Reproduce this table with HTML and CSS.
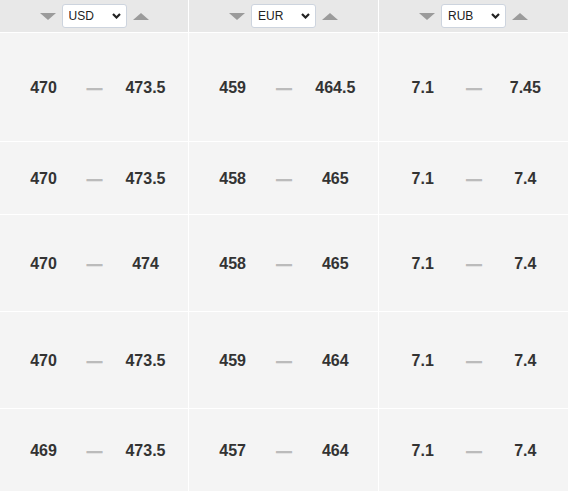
FILE: index.html
```html
<!DOCTYPE html>
<html lang="en">
<head>
<meta charset="utf-8">
<title>Rates</title>
<link rel="stylesheet" href="styles.css">
</head>
<body>
<div class="table">
  <div class="head">
    <span class="tri tri-down"></span>
    <span class="pick"><select class="sel"><option>USD</option><option>EUR</option><option>RUB</option></select><svg class="chev" width="9" height="6" viewBox="0 0 9 6"><path d="M1 1 L4.5 4.5 L8 1" fill="none" stroke="#222" stroke-width="2.2"/></svg></span>
    <span class="tri tri-up"></span>
  </div>
  <div class="head">
    <span class="tri tri-down"></span>
    <span class="pick"><select class="sel"><option>EUR</option><option>USD</option><option>RUB</option></select><svg class="chev" width="9" height="6" viewBox="0 0 9 6"><path d="M1 1 L4.5 4.5 L8 1" fill="none" stroke="#222" stroke-width="2.2"/></svg></span>
    <span class="tri tri-up"></span>
  </div>
  <div class="head">
    <span class="tri tri-down"></span>
    <span class="pick"><select class="sel"><option>RUB</option><option>USD</option><option>EUR</option></select><svg class="chev" width="9" height="6" viewBox="0 0 9 6"><path d="M1 1 L4.5 4.5 L8 1" fill="none" stroke="#222" stroke-width="2.2"/></svg></span>
    <span class="tri tri-up"></span>
  </div>

  <div class="cell"><span>470</span><span class="dash">—</span><span>473.5</span></div>
  <div class="cell"><span>459</span><span class="dash">—</span><span>464.5</span></div>
  <div class="cell"><span>7.1</span><span class="dash">—</span><span>7.45</span></div>

  <div class="cell"><span>470</span><span class="dash">—</span><span>473.5</span></div>
  <div class="cell"><span>458</span><span class="dash">—</span><span>465</span></div>
  <div class="cell"><span>7.1</span><span class="dash">—</span><span>7.4</span></div>

  <div class="cell"><span>470</span><span class="dash">—</span><span>474</span></div>
  <div class="cell"><span>458</span><span class="dash">—</span><span>465</span></div>
  <div class="cell"><span>7.1</span><span class="dash">—</span><span>7.4</span></div>

  <div class="cell"><span>470</span><span class="dash">—</span><span>473.5</span></div>
  <div class="cell"><span>459</span><span class="dash">—</span><span>464</span></div>
  <div class="cell"><span>7.1</span><span class="dash">—</span><span>7.4</span></div>

  <div class="cell"><span>469</span><span class="dash">—</span><span>473.5</span></div>
  <div class="cell"><span>457</span><span class="dash">—</span><span>464</span></div>
  <div class="cell"><span>7.1</span><span class="dash">—</span><span>7.4</span></div>
</div>
</body>
</html>
```
FILE: styles.css
```css
html, body {
  margin: 0;
  padding: 0;
  background: #f4f4f4;
}
body {
  font-family: "Liberation Sans", Arial, sans-serif;
  overflow: hidden;
}
.table {
  display: grid;
  grid-template-columns: 188px 189px 189px;
  grid-template-rows: 32px 108px 72px 96px 96px 82px;
  gap: 1px;
  background: #ffffff;
  width: 568px;
}
.head {
  background: #e8e8e8;
  display: flex;
  align-items: center;
  justify-content: center;
  gap: 6px;
}
.tri {
  width: 0;
  height: 0;
  border-left: 8px solid transparent;
  border-right: 8px solid transparent;
}
.tri-down {
  border-top: 7px solid #9b9b9b;
  margin-top: 1px;
}
.tri-up {
  border-bottom: 7px solid #9b9b9b;
  margin-top: 1px;
}
.pick {
  position: relative;
  display: block;
  width: 65px;
  height: 24px;
}
.sel {
  appearance: none;
  -webkit-appearance: none;
  box-sizing: border-box;
  width: 65px;
  height: 24px;
  margin: 0;
  padding: 0 0 0 6px;
  border: 1px solid #cdd4de;
  border-radius: 3px;
  background: #ffffff;
  font-family: "Liberation Sans", Arial, sans-serif;
  font-size: 12px;
  color: #222222;
  outline: none;
}
.chev {
  position: absolute;
  right: 6px;
  top: 9px;
  pointer-events: none;
}
.cell {
  background: #f4f4f4;
  display: grid;
  grid-template-columns: 1fr 1fr 1fr;
  align-items: center;
  justify-items: center;
  padding: 1px 17px 0 18px;
  font-size: 16px;
  font-weight: bold;
  color: #333333;
}
.dash {
  color: #bbbbbb;
  font-weight: normal;
  text-shadow: 0 1px 0 #bbbbbb;
}
```
